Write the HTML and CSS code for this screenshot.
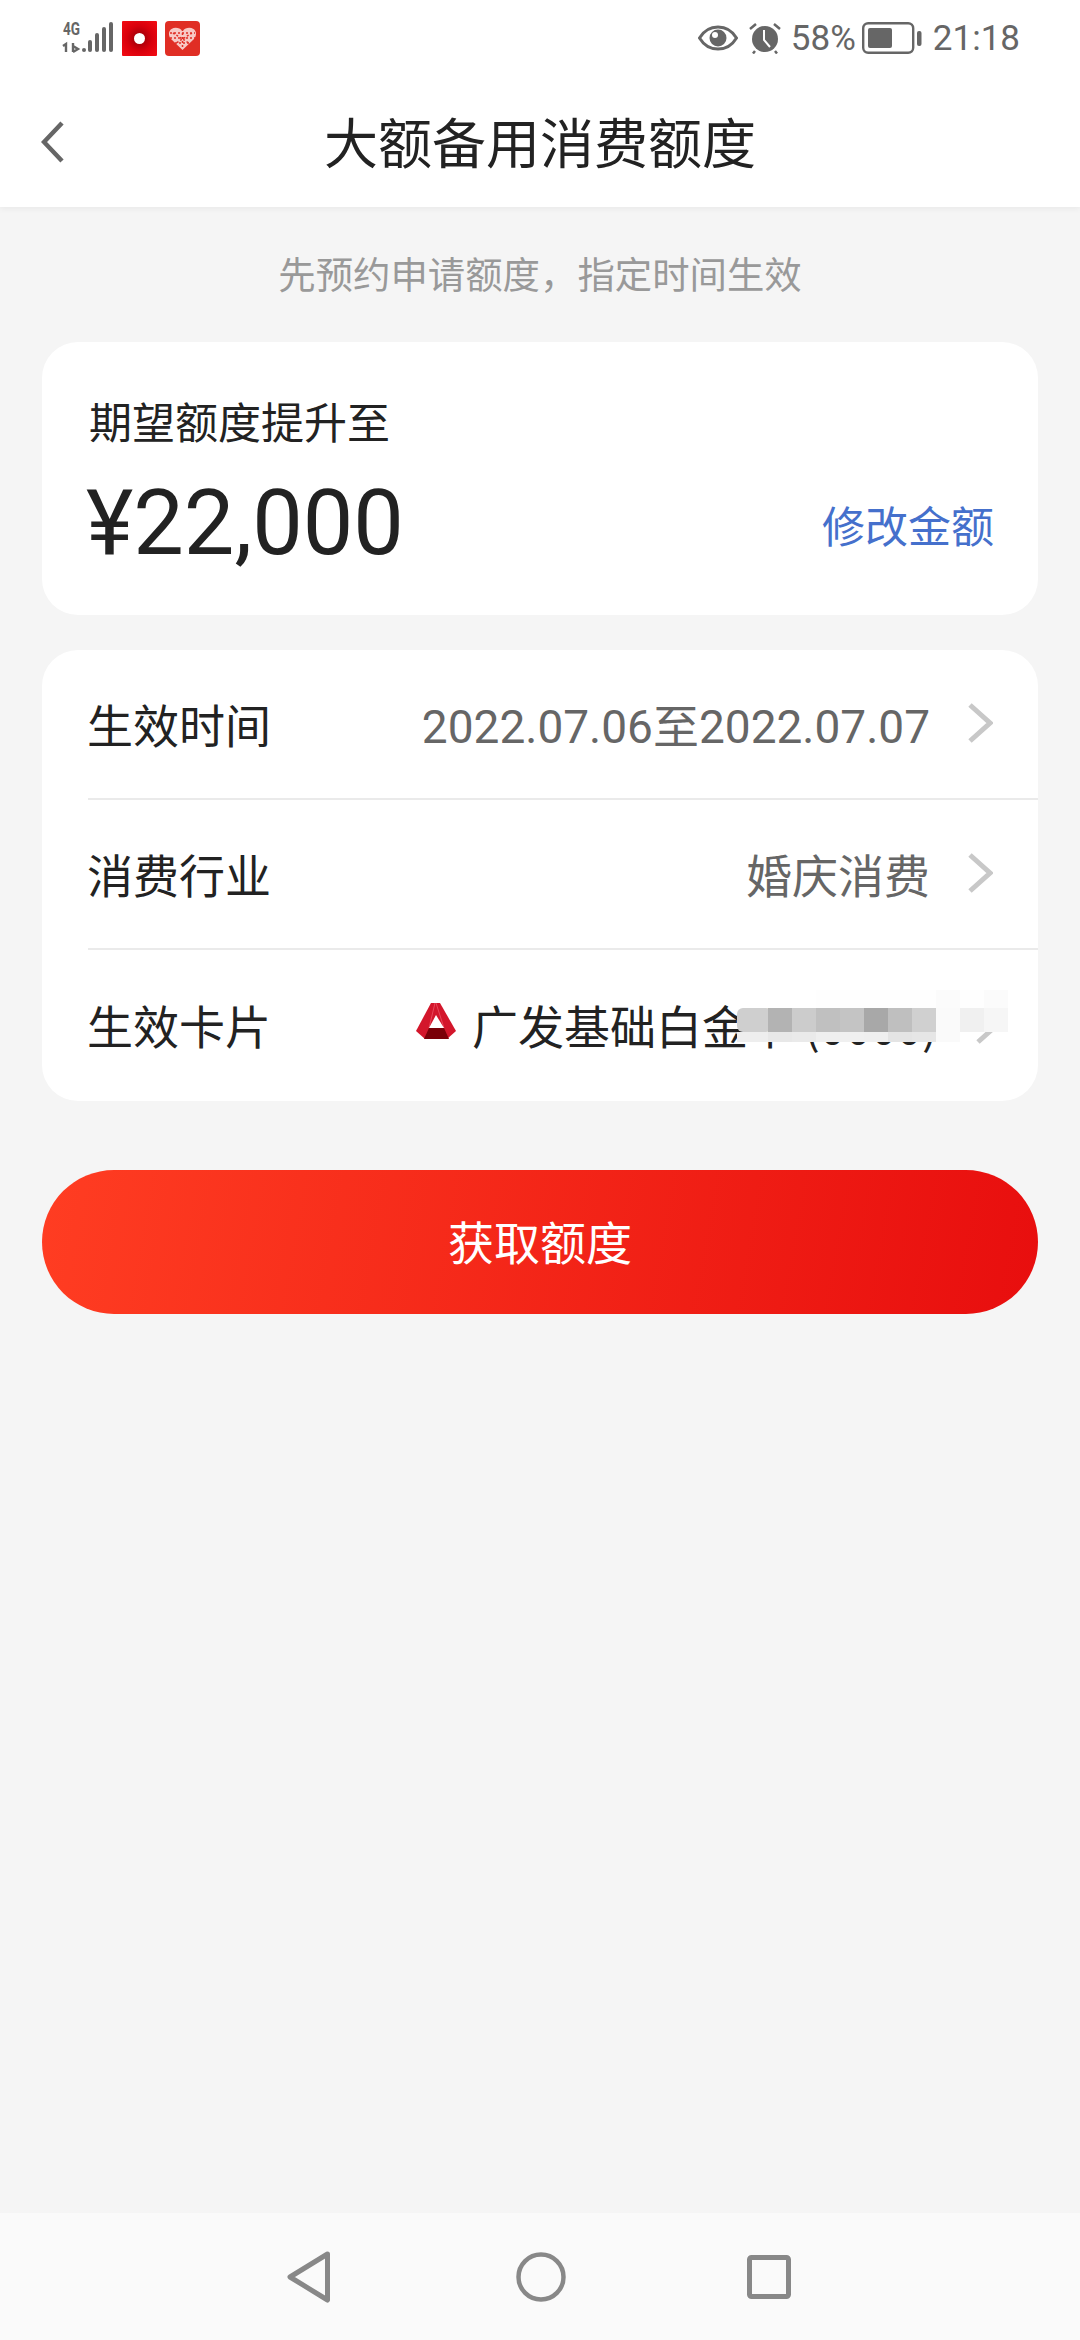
FILE: index.html
```html
<!DOCTYPE html>
<html lang="zh-CN">
<head>
    <meta charset="UTF-8">
    <meta name="viewport" content="width=device-width, initial-scale=1.0">
    <title>大额备用消费额度</title>
    <link rel="stylesheet" href="styles.css">
</head>
<body>
    <div class="page">
        <header class="topbar">
            <div class="status">
                <div class="status-left">
                    <svg class="net" width="52" height="34" viewBox="0 0 52 34">
                        <text x="1" y="14" class="net-label" textLength="17" lengthAdjust="spacingAndGlyphs">4G</text>
                        <path d="M1 25l3-2v8M11 22v9M11 25l5 3-5 3" fill="none" stroke="#666" stroke-width="2.4"/>
                        <g fill="#666">
                            <rect x="20" y="27" width="4" height="4" rx="2"/>
                            <rect x="26" y="19" width="4" height="12" rx="2"/>
                            <rect x="33" y="12" width="4" height="19" rx="2"/>
                            <rect x="40" y="6" width="4" height="25" rx="2"/>
                            <rect x="47" y="1" width="4" height="30" rx="2"/>
                        </g>
                    </svg>
                    <svg width="35" height="35" viewBox="0 0 35 35">
                        <defs>
                            <radialGradient id="swirl" cx="50%" cy="50%" r="65%">
                                <stop offset="0" stop-color="#8c0008"/>
                                <stop offset=".55" stop-color="#d8000c"/>
                                <stop offset="1" stop-color="#f00a12"/>
                            </radialGradient>
                        </defs>
                        <rect width="35" height="35" rx="1" fill="url(#swirl)"/>
                        <circle cx="17.5" cy="17.5" r="5.5" fill="#fff"/>
                    </svg>
                    <svg width="35" height="35" viewBox="0 0 35 35">
                        <rect width="35" height="35" rx="4" fill="#e02e24"/>
                        <path d="M17.5 29L6 18c-3-3.500-2.500-8 .5-10 3.500-2.300 8-1.500 11 2 3-3.500 7.500-4.300 11-2 3 2 3.500 6.500.5 10z" fill="#f7c9c5"/>
                        <path d="M8 12l19 12M27 12L8 24M17.500 8v20M5 17h25M5 12h25M6 22h23" stroke="#e02e24" stroke-width="1.500" stroke-dasharray="2 2"/>
                    </svg>
                </div>
                <div class="status-right">
                    <svg width="40" height="26" viewBox="0 0 40 26">
                        <path d="M1.500 13C6 5.500 12 2 20 2s14 3.500 18.500 11C34 20.500 28 24 20 24S6 20.500 1.500 13z" fill="none" stroke="#666" stroke-width="3"/>
                        <circle cx="20" cy="13" r="8.500" fill="#666"/>
                        <circle cx="17" cy="10" r="3" fill="#fff"/>
                    </svg>
                    <svg class="alarm" width="34" height="32" viewBox="0 0 34 32">
                        <circle cx="17" cy="17" r="13" fill="#666"/>
                        <path d="M2 7l6-5M32 7l-6-5M7 29l-2 2.500M27 29l2 2.500" stroke="#666" stroke-width="2.500" fill="none"/>
                        <path d="M16 8v10l6 7" stroke="#fff" stroke-width="2" fill="none"/>
                    </svg>
                    <span class="status-text">58%</span>
                    <svg class="battery" width="60" height="32" viewBox="0 0 60 32">
                        <rect x="1.200" y="1.200" width="50" height="29.600" rx="5" fill="none" stroke="#666" stroke-width="2.400"/>
                        <rect x="6" y="6" width="24" height="20" rx="2" fill="#666"/>
                        <rect x="55" y="9" width="4.500" height="15" rx="2" fill="#666"/>
                    </svg>
                    <span class="status-text time">21:18</span>
                </div>
            </div>
            <div class="titlebar">
                <svg class="back" width="24" height="42" viewBox="0 0 24 42">
                    <path d="M21 2L3 21l18 19" fill="none" stroke="#666" stroke-width="4.500"/>
                </svg>
                <h1>大额备用消费额度</h1>
            </div>
        </header>

        <main class="content">
            <p class="hint">先预约申请额度，指定时间生效</p>

            <section class="card amount-card">
                <div class="amount-label">期望额度提升至</div>
                <div class="amount-row">
                    <span class="amount">¥22,000</span>
                    <a class="edit">修改金额</a>
                </div>
            </section>

            <section class="card list-card">
                <div class="row">
                    <span class="row-label">生效时间</span>
                    <span class="row-value row-date">2022.07.06至2022.07.07</span>
                    <svg class="chevron" width="25" height="42" viewBox="0 0 25 42"><path d="M2 3l20 18L2 39" fill="none" stroke="#c8c8c8" stroke-width="5"/></svg>
                </div>
                <div class="row">
                    <span class="row-label">消费行业</span>
                    <span class="row-value">婚庆消费</span>
                    <svg class="chevron" width="25" height="42" viewBox="0 0 25 42"><path d="M2 3l20 18L2 39" fill="none" stroke="#c8c8c8" stroke-width="5"/></svg>
                </div>
                <div class="row">
                    <span class="row-label">生效卡片</span>
                    <span class="row-value card-value">
                        <svg class="bank" width="40" height="38" viewBox="0 0 40 38">
                            <path d="M15 1h9l16 28-9 8H9l-9-8z" fill="#d3162b"/>
                            <path d="M19 1l-6 25M20 1l8 25" stroke="#e8475a" stroke-width="1" fill="none"/>
                            <path d="M20 13l8 13H13z" fill="#fff"/>
                            <path d="M13 26h15l5 11H8z" fill="#7a0008"/>
                        </svg>
                        广发基础白金卡 (0000)
                    </span>
                    <svg class="chevron" width="25" height="42" viewBox="0 0 25 42"><path d="M2 3l20 18L2 39" fill="none" stroke="#c8c8c8" stroke-width="5"/></svg>
                    <svg class="mosaic" width="271" height="52" viewBox="0 0 271 52">
                        <defs><filter id="soft"><feGaussianBlur stdDeviation="0.7"/></filter></defs>
                        <g filter="url(#soft)">
                            <rect x="6" y="6" width="73" height="12" fill="#ffffff"/>
                            <rect x="79" y="0" width="192" height="18" fill="#fefefe"/>
                            <rect x="199" y="0" width="24" height="18" fill="#fbfbfb"/>
                            <rect x="247" y="0" width="24" height="18" fill="#fbfbfb"/>
                            <rect x="0" y="18" width="35" height="24" rx="6" fill="#cfcfcf"/>
                            <rect x="31" y="18" width="24" height="24" fill="#b3b3b3"/>
                            <rect x="55" y="18" width="24" height="24" fill="#cccccc"/>
                            <rect x="79" y="18" width="24" height="24" fill="#c0c0c0"/>
                            <rect x="103" y="18" width="24" height="24" fill="#c4c4c4"/>
                            <rect x="127" y="18" width="24" height="24" fill="#a8a8a8"/>
                            <rect x="151" y="18" width="24" height="24" fill="#bfbfbf"/>
                            <rect x="175" y="18" width="24" height="24" fill="#d0d0d0"/>
                            <rect x="199" y="18" width="24" height="24" fill="#fafafa"/>
                            <rect x="223" y="18" width="24" height="24" fill="#f0f0f0"/>
                            <rect x="247" y="18" width="24" height="24" fill="#f6f6f6"/>
                            <rect x="0" y="42" width="31" height="10" fill="#eeeeee"/>
                            <rect x="31" y="42" width="24" height="10" fill="#e8e8e8"/>
                            <rect x="55" y="42" width="24" height="10" fill="#eaeaea"/>
                            <rect x="79" y="42" width="24" height="10" fill="#efefef"/>
                            <rect x="103" y="42" width="24" height="10" fill="#f0f0f0"/>
                            <rect x="127" y="42" width="24" height="10" fill="#efefef"/>
                            <rect x="151" y="42" width="24" height="10" fill="#e4e4e4"/>
                            <rect x="175" y="42" width="24" height="10" fill="#e6e6e6"/>
                            <rect x="199" y="42" width="24" height="10" fill="#fafafa"/>
                        </g>
                    </svg>
                </div>
            </section>

            <button class="submit">获取额度</button>
        </main>

        <nav class="navbar">
            <svg width="46" height="54" viewBox="0 0 46 54"><path d="M41.500 4L4 27l37.500 23z" fill="none" stroke="#888" stroke-width="5" stroke-linejoin="round"/></svg>
            <svg width="50" height="50" viewBox="0 0 50 50"><circle cx="25" cy="25" r="22.500" fill="none" stroke="#888" stroke-width="4.500"/></svg>
            <svg class="nav-square" width="44" height="44" viewBox="0 0 44 44"><rect x="2.500" y="2.500" width="39" height="39" rx="2" fill="none" stroke="#888" stroke-width="5"/></svg>
        </nav>
    </div>
</body>
</html>
```

FILE: styles.css
```css
* {
    box-sizing: border-box;
}
body {
    margin: 0;
    padding: 0;
    background: #f5f5f5;
    font-family: "Noto Sans CJK SC", "Noto Sans", sans-serif;
    color: #222;
}
.page {
    display: flex;
    flex-direction: column;
    height: 2340px;
}
.topbar {
    height: 207px;
    background: #fff;
    box-shadow: 0px 2px 6px rgba(0, 0, 0, 0.05);
}
.status {
    display: flex;
    justify-content: space-between;
    align-items: center;
    height: 76px;
    padding: 0 60px 0 62px;
}
.status-left {
    display: flex;
    align-items: center;
    gap: 8px;
}
.net {
    overflow: visible;
}
.net-label {
    font-family: Roboto, sans-serif;
    font-size: 19px;
    font-weight: 700;
    fill: #666;
}
.status-right {
    display: flex;
    align-items: center;
}
.alarm {
    margin-left: 10px;
}
.status-text {
    font-family: Roboto, sans-serif;
    font-size: 35px;
    color: #666;
    margin-left: 9px;
}
.battery {
    margin-left: 6px;
}
.time {
    margin-left: 11px;
}
.titlebar {
    position: relative;
    display: flex;
    justify-content: center;
    align-items: center;
    height: 131px;
    padding-bottom: 2px;
}
.titlebar h1 {
    margin: 0;
    font-size: 54px;
    font-weight: 400;
    color: #222;
}
.back {
    position: absolute;
    left: 41px;
    top: 45px;
}
.content {
    display: flex;
    flex-direction: column;
    padding: 0 42px;
}
.hint {
    margin: 44px 0 0;
    height: 91px;
    font-size: 37.4px;
    line-height: 44px;
    text-align: center;
    color: #999;
}
.card {
    background: #fff;
    border-radius: 36px;
}
.amount-card {
    height: 273px;
    padding: 48px 44px 0 47px;
}
.amount-label {
    font-size: 43px;
    line-height: 60px;
}
.amount-row {
    display: flex;
    justify-content: space-between;
    align-items: center;
    margin-top: 22px;
}
.amount {
    font-family: Roboto, sans-serif;
    font-size: 90px;
    line-height: 104px;
    margin-left: -3px;
}
.edit {
    font-size: 43px;
    color: #4570cc;
}
.list-card {
    margin-top: 35px;
    height: 451px;
    overflow: hidden;
}
.row {
    position: relative;
    display: flex;
    align-items: center;
    height: 150px;
    margin-left: 46px;
    padding-right: 45px;
    padding-bottom: 3px;
    border-bottom: 2px solid #eaeaea;
}
.row:last-child {
    border-bottom: none;
}
.row-label {
    font-size: 46px;
    flex: none;
    margin-left: -1px;
}
.row-value {
    flex: 1;
    text-align: right;
    font-size: 46px;
    color: #666;
    white-space: nowrap;
}
.row-date {
    font-family: Roboto, "Noto Sans CJK SC", sans-serif;
}
.chevron {
    flex: none;
    margin-left: 38px;
}
.card-value {
    display: flex;
    align-items: center;
    color: #222;
    margin-left: 145px;
}
.bank {
    flex: none;
    margin-right: 16px;
    margin-bottom: 6px;
}
.mosaic {
    position: absolute;
    left: 649px;
    top: 40px;
}
.submit {
    margin-top: 69px;
    height: 144px;
    padding-bottom: 6px;
    border: none;
    border-radius: 72px;
    background: linear-gradient(100deg, #ff3d22, #e80e0e);
    color: #fff;
    font-family: inherit;
    font-size: 46px;
}
.navbar {
    margin-top: auto;
    height: 127px;
    background: #fafafa;
    display: flex;
    align-items: center;
    gap: 184px;
    padding-left: 286px;
}
.nav-square {
    margin-left: -3px;
}
```
